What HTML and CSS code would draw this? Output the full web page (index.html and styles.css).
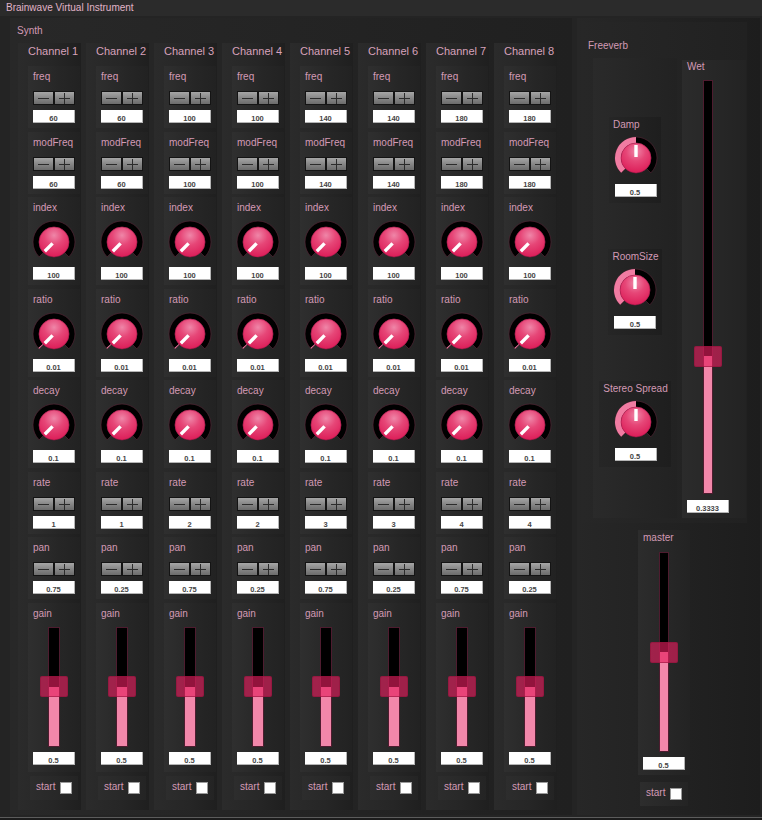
FILE: index.html
```html
<!DOCTYPE html>
<html lang="en">
<head>
<meta charset="utf-8">
<title>Brainwave Virtual Instrument</title>
<link rel="stylesheet" href="styles.css">
</head>
<body>
<svg class="defs" aria-hidden="true">
  <defs>
    <radialGradient id="kg" cx="50%" cy="28%" r="72%">
      <stop offset="0" stop-color="#ef86a8"/>
      <stop offset="0.45" stop-color="#e64677"/>
      <stop offset="1" stop-color="#dc1d58"/>
    </radialGradient>
    <symbol id="minus"><line x1="4" y1="6.5" x2="15" y2="6.5" stroke="#2b2b2b" stroke-width="1"/></symbol>
    <symbol id="plus"><line x1="4" y1="6.5" x2="15" y2="6.5" stroke="#2b2b2b" stroke-width="1"/><line x1="9.5" y1="1" x2="9.5" y2="12" stroke="#2b2b2b" stroke-width="1"/></symbol>
    <symbol id="k-min">
      <path d="M7.15 36.85A21 21 0 1 1 36.85 36.85L32.61 32.61A15 15 0 1 0 11.39 32.61Z" fill="#000" stroke="#5a2639" stroke-width="0.6"/>
      <circle cx="22" cy="22" r="15" fill="url(#kg)" stroke="#a8154a" stroke-width="0.5"/>
      <line x1="20.6" y1="23.4" x2="12.8" y2="31.2" stroke="#fff" stroke-width="3.4"/>
    </symbol>
    <symbol id="k-tick">
      <path d="M7.15 36.85A21 21 0 1 1 36.85 36.85L32.61 32.61A15 15 0 1 0 11.39 32.61Z" fill="#000" stroke="#5a2639" stroke-width="0.6"/>
      <path d="M7.15 36.85A21 21 0 0 1 6.39 36.05L10.85 32.04A15 15 0 0 0 11.39 32.61Z" fill="#f07ca2"/>
      <circle cx="22" cy="22" r="15" fill="url(#kg)" stroke="#a8154a" stroke-width="0.5"/>
      <line x1="20.6" y1="23.4" x2="12.8" y2="31.2" stroke="#fff" stroke-width="3.4"/>
    </symbol>
    <symbol id="k-half">
      <path d="M7.15 36.85A21 21 0 1 1 36.85 36.85L32.61 32.61A15 15 0 1 0 11.39 32.61Z" fill="#000" stroke="#5a2639" stroke-width="0.6"/>
      <path d="M7.15 36.85A21 21 0 0 1 22 1L22 7A15 15 0 0 0 11.39 32.61Z" fill="#f07ca2"/>
      <circle cx="22" cy="22" r="15" fill="url(#kg)" stroke="#a8154a" stroke-width="0.5"/>
      <line x1="22" y1="21" x2="22" y2="9" stroke="#fff" stroke-width="3.4"/>
    </symbol>
  </defs>
</svg>

<div class="app">
  <div class="titlebar">Brainwave Virtual Instrument</div>
  <div class="main">
    <section class="synth">
      <div class="synth-label">Synth</div>
      <div class="channels">

        <div class="channel">
          <div class="ch-title">Channel 1</div>
          <div class="ctrls">
            <div class="panel"><div class="lbl">freq</div><div class="btns"><span class="btn"><svg class="glyph" viewBox="0 0 19 12"><use href="#minus"/></svg></span><span class="btn"><svg class="glyph" viewBox="0 0 19 12"><use href="#plus"/></svg></span></div><div class="val">60</div></div>
            <div class="panel"><div class="lbl">modFreq</div><div class="btns"><span class="btn"><svg class="glyph" viewBox="0 0 19 12"><use href="#minus"/></svg></span><span class="btn"><svg class="glyph" viewBox="0 0 19 12"><use href="#plus"/></svg></span></div><div class="val">60</div></div>
            <div class="panel knobp"><div class="lbl">index</div><svg class="knob" viewBox="0 0 44 44"><use href="#k-min"/></svg><div class="val">100</div></div>
            <div class="panel knobp"><div class="lbl">ratio</div><svg class="knob" viewBox="0 0 44 44"><use href="#k-tick"/></svg><div class="val">0.01</div></div>
            <div class="panel knobp"><div class="lbl">decay</div><svg class="knob" viewBox="0 0 44 44"><use href="#k-min"/></svg><div class="val">0.1</div></div>
            <div class="panel"><div class="lbl">rate</div><div class="btns"><span class="btn"><svg class="glyph" viewBox="0 0 19 12"><use href="#minus"/></svg></span><span class="btn"><svg class="glyph" viewBox="0 0 19 12"><use href="#plus"/></svg></span></div><div class="val">1</div></div>
            <div class="panel"><div class="lbl">pan</div><div class="btns"><span class="btn"><svg class="glyph" viewBox="0 0 19 12"><use href="#minus"/></svg></span><span class="btn"><svg class="glyph" viewBox="0 0 19 12"><use href="#plus"/></svg></span></div><div class="val">0.75</div></div>
            <div class="panel gainp"><div class="lbl">gain</div><div class="slider"><div class="track"><div class="fill" style="height:50%"></div></div><div class="thumb" style="top:calc(50% - 10.5px)"></div></div><div class="val">0.5</div></div>
            <div class="start"><span class="lbl">start</span><span class="check"></span></div>
          </div>
        </div>

        <div class="channel">
          <div class="ch-title">Channel 2</div>
          <div class="ctrls">
            <div class="panel"><div class="lbl">freq</div><div class="btns"><span class="btn"><svg class="glyph" viewBox="0 0 19 12"><use href="#minus"/></svg></span><span class="btn"><svg class="glyph" viewBox="0 0 19 12"><use href="#plus"/></svg></span></div><div class="val">60</div></div>
            <div class="panel"><div class="lbl">modFreq</div><div class="btns"><span class="btn"><svg class="glyph" viewBox="0 0 19 12"><use href="#minus"/></svg></span><span class="btn"><svg class="glyph" viewBox="0 0 19 12"><use href="#plus"/></svg></span></div><div class="val">60</div></div>
            <div class="panel knobp"><div class="lbl">index</div><svg class="knob" viewBox="0 0 44 44"><use href="#k-min"/></svg><div class="val">100</div></div>
            <div class="panel knobp"><div class="lbl">ratio</div><svg class="knob" viewBox="0 0 44 44"><use href="#k-tick"/></svg><div class="val">0.01</div></div>
            <div class="panel knobp"><div class="lbl">decay</div><svg class="knob" viewBox="0 0 44 44"><use href="#k-min"/></svg><div class="val">0.1</div></div>
            <div class="panel"><div class="lbl">rate</div><div class="btns"><span class="btn"><svg class="glyph" viewBox="0 0 19 12"><use href="#minus"/></svg></span><span class="btn"><svg class="glyph" viewBox="0 0 19 12"><use href="#plus"/></svg></span></div><div class="val">1</div></div>
            <div class="panel"><div class="lbl">pan</div><div class="btns"><span class="btn"><svg class="glyph" viewBox="0 0 19 12"><use href="#minus"/></svg></span><span class="btn"><svg class="glyph" viewBox="0 0 19 12"><use href="#plus"/></svg></span></div><div class="val">0.25</div></div>
            <div class="panel gainp"><div class="lbl">gain</div><div class="slider"><div class="track"><div class="fill" style="height:50%"></div></div><div class="thumb" style="top:calc(50% - 10.5px)"></div></div><div class="val">0.5</div></div>
            <div class="start"><span class="lbl">start</span><span class="check"></span></div>
          </div>
        </div>

        <div class="channel">
          <div class="ch-title">Channel 3</div>
          <div class="ctrls">
            <div class="panel"><div class="lbl">freq</div><div class="btns"><span class="btn"><svg class="glyph" viewBox="0 0 19 12"><use href="#minus"/></svg></span><span class="btn"><svg class="glyph" viewBox="0 0 19 12"><use href="#plus"/></svg></span></div><div class="val">100</div></div>
            <div class="panel"><div class="lbl">modFreq</div><div class="btns"><span class="btn"><svg class="glyph" viewBox="0 0 19 12"><use href="#minus"/></svg></span><span class="btn"><svg class="glyph" viewBox="0 0 19 12"><use href="#plus"/></svg></span></div><div class="val">100</div></div>
            <div class="panel knobp"><div class="lbl">index</div><svg class="knob" viewBox="0 0 44 44"><use href="#k-min"/></svg><div class="val">100</div></div>
            <div class="panel knobp"><div class="lbl">ratio</div><svg class="knob" viewBox="0 0 44 44"><use href="#k-tick"/></svg><div class="val">0.01</div></div>
            <div class="panel knobp"><div class="lbl">decay</div><svg class="knob" viewBox="0 0 44 44"><use href="#k-min"/></svg><div class="val">0.1</div></div>
            <div class="panel"><div class="lbl">rate</div><div class="btns"><span class="btn"><svg class="glyph" viewBox="0 0 19 12"><use href="#minus"/></svg></span><span class="btn"><svg class="glyph" viewBox="0 0 19 12"><use href="#plus"/></svg></span></div><div class="val">2</div></div>
            <div class="panel"><div class="lbl">pan</div><div class="btns"><span class="btn"><svg class="glyph" viewBox="0 0 19 12"><use href="#minus"/></svg></span><span class="btn"><svg class="glyph" viewBox="0 0 19 12"><use href="#plus"/></svg></span></div><div class="val">0.75</div></div>
            <div class="panel gainp"><div class="lbl">gain</div><div class="slider"><div class="track"><div class="fill" style="height:50%"></div></div><div class="thumb" style="top:calc(50% - 10.5px)"></div></div><div class="val">0.5</div></div>
            <div class="start"><span class="lbl">start</span><span class="check"></span></div>
          </div>
        </div>

        <div class="channel">
          <div class="ch-title">Channel 4</div>
          <div class="ctrls">
            <div class="panel"><div class="lbl">freq</div><div class="btns"><span class="btn"><svg class="glyph" viewBox="0 0 19 12"><use href="#minus"/></svg></span><span class="btn"><svg class="glyph" viewBox="0 0 19 12"><use href="#plus"/></svg></span></div><div class="val">100</div></div>
            <div class="panel"><div class="lbl">modFreq</div><div class="btns"><span class="btn"><svg class="glyph" viewBox="0 0 19 12"><use href="#minus"/></svg></span><span class="btn"><svg class="glyph" viewBox="0 0 19 12"><use href="#plus"/></svg></span></div><div class="val">100</div></div>
            <div class="panel knobp"><div class="lbl">index</div><svg class="knob" viewBox="0 0 44 44"><use href="#k-min"/></svg><div class="val">100</div></div>
            <div class="panel knobp"><div class="lbl">ratio</div><svg class="knob" viewBox="0 0 44 44"><use href="#k-tick"/></svg><div class="val">0.01</div></div>
            <div class="panel knobp"><div class="lbl">decay</div><svg class="knob" viewBox="0 0 44 44"><use href="#k-min"/></svg><div class="val">0.1</div></div>
            <div class="panel"><div class="lbl">rate</div><div class="btns"><span class="btn"><svg class="glyph" viewBox="0 0 19 12"><use href="#minus"/></svg></span><span class="btn"><svg class="glyph" viewBox="0 0 19 12"><use href="#plus"/></svg></span></div><div class="val">2</div></div>
            <div class="panel"><div class="lbl">pan</div><div class="btns"><span class="btn"><svg class="glyph" viewBox="0 0 19 12"><use href="#minus"/></svg></span><span class="btn"><svg class="glyph" viewBox="0 0 19 12"><use href="#plus"/></svg></span></div><div class="val">0.25</div></div>
            <div class="panel gainp"><div class="lbl">gain</div><div class="slider"><div class="track"><div class="fill" style="height:50%"></div></div><div class="thumb" style="top:calc(50% - 10.5px)"></div></div><div class="val">0.5</div></div>
            <div class="start"><span class="lbl">start</span><span class="check"></span></div>
          </div>
        </div>

        <div class="channel">
          <div class="ch-title">Channel 5</div>
          <div class="ctrls">
            <div class="panel"><div class="lbl">freq</div><div class="btns"><span class="btn"><svg class="glyph" viewBox="0 0 19 12"><use href="#minus"/></svg></span><span class="btn"><svg class="glyph" viewBox="0 0 19 12"><use href="#plus"/></svg></span></div><div class="val">140</div></div>
            <div class="panel"><div class="lbl">modFreq</div><div class="btns"><span class="btn"><svg class="glyph" viewBox="0 0 19 12"><use href="#minus"/></svg></span><span class="btn"><svg class="glyph" viewBox="0 0 19 12"><use href="#plus"/></svg></span></div><div class="val">140</div></div>
            <div class="panel knobp"><div class="lbl">index</div><svg class="knob" viewBox="0 0 44 44"><use href="#k-min"/></svg><div class="val">100</div></div>
            <div class="panel knobp"><div class="lbl">ratio</div><svg class="knob" viewBox="0 0 44 44"><use href="#k-tick"/></svg><div class="val">0.01</div></div>
            <div class="panel knobp"><div class="lbl">decay</div><svg class="knob" viewBox="0 0 44 44"><use href="#k-min"/></svg><div class="val">0.1</div></div>
            <div class="panel"><div class="lbl">rate</div><div class="btns"><span class="btn"><svg class="glyph" viewBox="0 0 19 12"><use href="#minus"/></svg></span><span class="btn"><svg class="glyph" viewBox="0 0 19 12"><use href="#plus"/></svg></span></div><div class="val">3</div></div>
            <div class="panel"><div class="lbl">pan</div><div class="btns"><span class="btn"><svg class="glyph" viewBox="0 0 19 12"><use href="#minus"/></svg></span><span class="btn"><svg class="glyph" viewBox="0 0 19 12"><use href="#plus"/></svg></span></div><div class="val">0.75</div></div>
            <div class="panel gainp"><div class="lbl">gain</div><div class="slider"><div class="track"><div class="fill" style="height:50%"></div></div><div class="thumb" style="top:calc(50% - 10.5px)"></div></div><div class="val">0.5</div></div>
            <div class="start"><span class="lbl">start</span><span class="check"></span></div>
          </div>
        </div>

        <div class="channel">
          <div class="ch-title">Channel 6</div>
          <div class="ctrls">
            <div class="panel"><div class="lbl">freq</div><div class="btns"><span class="btn"><svg class="glyph" viewBox="0 0 19 12"><use href="#minus"/></svg></span><span class="btn"><svg class="glyph" viewBox="0 0 19 12"><use href="#plus"/></svg></span></div><div class="val">140</div></div>
            <div class="panel"><div class="lbl">modFreq</div><div class="btns"><span class="btn"><svg class="glyph" viewBox="0 0 19 12"><use href="#minus"/></svg></span><span class="btn"><svg class="glyph" viewBox="0 0 19 12"><use href="#plus"/></svg></span></div><div class="val">140</div></div>
            <div class="panel knobp"><div class="lbl">index</div><svg class="knob" viewBox="0 0 44 44"><use href="#k-min"/></svg><div class="val">100</div></div>
            <div class="panel knobp"><div class="lbl">ratio</div><svg class="knob" viewBox="0 0 44 44"><use href="#k-tick"/></svg><div class="val">0.01</div></div>
            <div class="panel knobp"><div class="lbl">decay</div><svg class="knob" viewBox="0 0 44 44"><use href="#k-min"/></svg><div class="val">0.1</div></div>
            <div class="panel"><div class="lbl">rate</div><div class="btns"><span class="btn"><svg class="glyph" viewBox="0 0 19 12"><use href="#minus"/></svg></span><span class="btn"><svg class="glyph" viewBox="0 0 19 12"><use href="#plus"/></svg></span></div><div class="val">3</div></div>
            <div class="panel"><div class="lbl">pan</div><div class="btns"><span class="btn"><svg class="glyph" viewBox="0 0 19 12"><use href="#minus"/></svg></span><span class="btn"><svg class="glyph" viewBox="0 0 19 12"><use href="#plus"/></svg></span></div><div class="val">0.25</div></div>
            <div class="panel gainp"><div class="lbl">gain</div><div class="slider"><div class="track"><div class="fill" style="height:50%"></div></div><div class="thumb" style="top:calc(50% - 10.5px)"></div></div><div class="val">0.5</div></div>
            <div class="start"><span class="lbl">start</span><span class="check"></span></div>
          </div>
        </div>

        <div class="channel">
          <div class="ch-title">Channel 7</div>
          <div class="ctrls">
            <div class="panel"><div class="lbl">freq</div><div class="btns"><span class="btn"><svg class="glyph" viewBox="0 0 19 12"><use href="#minus"/></svg></span><span class="btn"><svg class="glyph" viewBox="0 0 19 12"><use href="#plus"/></svg></span></div><div class="val">180</div></div>
            <div class="panel"><div class="lbl">modFreq</div><div class="btns"><span class="btn"><svg class="glyph" viewBox="0 0 19 12"><use href="#minus"/></svg></span><span class="btn"><svg class="glyph" viewBox="0 0 19 12"><use href="#plus"/></svg></span></div><div class="val">180</div></div>
            <div class="panel knobp"><div class="lbl">index</div><svg class="knob" viewBox="0 0 44 44"><use href="#k-min"/></svg><div class="val">100</div></div>
            <div class="panel knobp"><div class="lbl">ratio</div><svg class="knob" viewBox="0 0 44 44"><use href="#k-tick"/></svg><div class="val">0.01</div></div>
            <div class="panel knobp"><div class="lbl">decay</div><svg class="knob" viewBox="0 0 44 44"><use href="#k-min"/></svg><div class="val">0.1</div></div>
            <div class="panel"><div class="lbl">rate</div><div class="btns"><span class="btn"><svg class="glyph" viewBox="0 0 19 12"><use href="#minus"/></svg></span><span class="btn"><svg class="glyph" viewBox="0 0 19 12"><use href="#plus"/></svg></span></div><div class="val">4</div></div>
            <div class="panel"><div class="lbl">pan</div><div class="btns"><span class="btn"><svg class="glyph" viewBox="0 0 19 12"><use href="#minus"/></svg></span><span class="btn"><svg class="glyph" viewBox="0 0 19 12"><use href="#plus"/></svg></span></div><div class="val">0.75</div></div>
            <div class="panel gainp"><div class="lbl">gain</div><div class="slider"><div class="track"><div class="fill" style="height:50%"></div></div><div class="thumb" style="top:calc(50% - 10.5px)"></div></div><div class="val">0.5</div></div>
            <div class="start"><span class="lbl">start</span><span class="check"></span></div>
          </div>
        </div>

        <div class="channel">
          <div class="ch-title">Channel 8</div>
          <div class="ctrls">
            <div class="panel"><div class="lbl">freq</div><div class="btns"><span class="btn"><svg class="glyph" viewBox="0 0 19 12"><use href="#minus"/></svg></span><span class="btn"><svg class="glyph" viewBox="0 0 19 12"><use href="#plus"/></svg></span></div><div class="val">180</div></div>
            <div class="panel"><div class="lbl">modFreq</div><div class="btns"><span class="btn"><svg class="glyph" viewBox="0 0 19 12"><use href="#minus"/></svg></span><span class="btn"><svg class="glyph" viewBox="0 0 19 12"><use href="#plus"/></svg></span></div><div class="val">180</div></div>
            <div class="panel knobp"><div class="lbl">index</div><svg class="knob" viewBox="0 0 44 44"><use href="#k-min"/></svg><div class="val">100</div></div>
            <div class="panel knobp"><div class="lbl">ratio</div><svg class="knob" viewBox="0 0 44 44"><use href="#k-tick"/></svg><div class="val">0.01</div></div>
            <div class="panel knobp"><div class="lbl">decay</div><svg class="knob" viewBox="0 0 44 44"><use href="#k-min"/></svg><div class="val">0.1</div></div>
            <div class="panel"><div class="lbl">rate</div><div class="btns"><span class="btn"><svg class="glyph" viewBox="0 0 19 12"><use href="#minus"/></svg></span><span class="btn"><svg class="glyph" viewBox="0 0 19 12"><use href="#plus"/></svg></span></div><div class="val">4</div></div>
            <div class="panel"><div class="lbl">pan</div><div class="btns"><span class="btn"><svg class="glyph" viewBox="0 0 19 12"><use href="#minus"/></svg></span><span class="btn"><svg class="glyph" viewBox="0 0 19 12"><use href="#plus"/></svg></span></div><div class="val">0.25</div></div>
            <div class="panel gainp"><div class="lbl">gain</div><div class="slider"><div class="track"><div class="fill" style="height:50%"></div></div><div class="thumb" style="top:calc(50% - 10.5px)"></div></div><div class="val">0.5</div></div>
            <div class="start"><span class="lbl">start</span><span class="check"></span></div>
          </div>
        </div>

      </div>
    </section>

    <aside class="side">
      <div class="freeverb">
        <div class="lbl">Freeverb</div>
        <div class="fv-body">
          <div class="fv-knobs">
            <div class="fvp"><div class="lbl">Damp</div><svg class="knob" viewBox="0 0 44 44"><use href="#k-half"/></svg><div class="val">0.5</div></div>
            <div class="fvp"><div class="lbl">RoomSize</div><svg class="knob" viewBox="0 0 44 44"><use href="#k-half"/></svg><div class="val">0.5</div></div>
            <div class="fvp"><div class="lbl">Stereo Spread</div><svg class="knob" viewBox="0 0 44 44"><use href="#k-half"/></svg><div class="val">0.5</div></div>
          </div>
          <div class="fv-wet">
            <div class="lbl">Wet</div>
            <div class="slider tall wet"><div class="track"><div class="fill" style="height:33.33%"></div></div><div class="thumb" style="top:calc(66.67% - 10.5px)"></div></div>
            <div class="val">0.3333</div>
          </div>
        </div>
      </div>
      <div class="master-wrap">
        <div class="master">
          <div class="lbl">master</div>
          <div class="slider tall mst"><div class="track"><div class="fill" style="height:50%"></div></div><div class="thumb" style="top:calc(50% - 10.5px)"></div></div>
          <div class="val">0.5</div>
        </div>
        <div class="start master-start"><span class="lbl">start</span><span class="check"></span></div>
      </div>
    </aside>
  </div>
</div>
</body>
</html>
```

FILE: styles.css
```css
* { box-sizing: border-box; }

html, body {
  margin: 0;
  padding: 0;
}

body {
  width: 762px;
  height: 820px;
  overflow: hidden;
  background: #1c1c1c;
  font-family: "Liberation Sans", Arial, sans-serif;
}

.defs {
  position: absolute;
  width: 0;
  height: 0;
  overflow: hidden;
}

.app {
  height: 818px;
  display: flex;
  flex-direction: column;
  background: #242424;
  border-bottom: 1px solid #5c5c5c;
}

.titlebar {
  height: 16px;
  line-height: 16px;
  font-size: 10px;
  padding-left: 6px;
  color: #e0b4c8;
  background: #2b2b2b;
  white-space: nowrap;
}

.main {
  display: flex;
  gap: 5px;
  height: 797px;
  margin-top: 2px;
  padding-left: 10px;
}

.lbl {
  font-size: 10px;
  line-height: 12px;
  color: #d39ab5;
  white-space: nowrap;
}

/* ---------- Synth ---------- */
.synth {
  width: 562px;
  padding: 7px 0 5px 8px;
  background: linear-gradient(90deg, #282828, #202020);
}

.synth-label {
  font-size: 10px;
  line-height: 12px;
  color: #d39ab5;
  margin-left: -1px;
}

.channels {
  display: flex;
  gap: 5px;
  margin-top: 6px;
}

.channel {
  width: 63px;
  padding: 2px 1px 10px 10px;
  display: flex;
  flex-direction: column;
  background: linear-gradient(90deg, #2b2b2b 0%, #262626 55%, #1f1f1f 100%);
}

.ch-title {
  font-size: 11px;
  line-height: 13px;
  color: #d7a2bb;
  white-space: nowrap;
  margin-bottom: 8px;
}

.ctrls {
  display: flex;
  flex-direction: column;
  gap: 3.5px;
}

.panel {
  width: 52px;
  padding: 5px;
  display: flex;
  flex-direction: column;
  align-items: center;
  background: linear-gradient(90deg, #2f2f2f, #262626 60%, #222222);
}

.panel .lbl,
.fvp .lbl,
.fv-wet .lbl,
.master .lbl {
  align-self: stretch;
}

.btns {
  display: flex;
  margin-top: 8px;
}

.btn {
  width: 21px;
  height: 14px;
  border: 1px solid #141414;
  background: linear-gradient(#a6a6a6, #8a8a8a 45%, #6c6c6c);
  display: flex;
  align-items: center;
  justify-content: center;
}

.glyph {
  width: 19px;
  height: 12px;
  display: block;
}

.val {
  width: 42px;
  height: 13px;
  margin-top: 5px;
  padding-top: 2px;
  background: #ffffff;
  border-right: 1px solid #b4b4b4;
  border-bottom: 1px solid #b4b4b4;
  font-size: 7.5px;
  line-height: 13px;
  font-weight: bold;
  color: #444444;
  text-align: center;
  white-space: nowrap;
}

.knob {
  width: 44px;
  height: 44px;
  display: block;
}

.knobp .knob { margin-top: 6px; }
.knobp .val { margin-top: 3px; }

.gainp { padding-bottom: 7px; }

.slider {
  position: relative;
  width: 42px;
  height: 120px;
  margin-top: 7px;
  display: flex;
  justify-content: center;
}

.track {
  width: 12px;
  height: 100%;
  border: 1px solid #4e1c2f;
  background: #000000;
  display: flex;
  flex-direction: column;
  justify-content: flex-end;
}

.fill {
  background: #f287aa;
}

.thumb {
  position: absolute;
  left: 7px;
  width: 28px;
  height: 21px;
  border-radius: 2px;
  background: rgba(228, 30, 94, 0.64);
  border: 1px solid rgba(140, 18, 56, 0.55);
}

.gainp .val { margin-top: 5px; }

.start {
  width: 48px;
  height: 24px;
  padding: 6px;
  margin-top: 1px;
  align-self: center;
  display: flex;
  align-items: flex-start;
  background: linear-gradient(90deg, #2d2d2d, #242424);
}

.start .lbl {
  line-height: 10px;
}

.check {
  width: 12px;
  height: 12px;
  margin-left: auto;
  background: #ffffff;
  border: 1px solid #9a9a9a;
}

/* ---------- Side (Freeverb + master) ---------- */
.side {
  width: 183px;
  padding: 4px 2px 0 4px;
  display: flex;
  flex-direction: column;
  background: linear-gradient(90deg, #272727, #1d1d1d);
}

.freeverb {
  width: 166px;
  height: 501px;
  padding: 18px 1px 5px 7px;
  background: linear-gradient(90deg, #272727, #212121);
}

.fv-body {
  display: flex;
  gap: 5px;
  margin-top: 6px;
  margin-left: 5px;
}

.fv-knobs {
  width: 84px;
  height: 460px;
  padding-top: 59px;
  display: flex;
  flex-direction: column;
  align-items: center;
  gap: 46px;
  background: linear-gradient(90deg, #2a2a2a, #222222);
}

.fvp {
  min-width: 52px;
  padding: 2px 3px 6px 4px;
  display: flex;
  flex-direction: column;
  align-items: center;
  background: linear-gradient(90deg, #262626, #1e1e1e);
}

.fvp .knob { margin-top: 5px; }
.fvp .val { margin-top: 4px; }

.fv-wet {
  width: 64px;
  height: 458px;
  margin-top: 2px;
  padding: 1px 0 5px 5px;
  display: flex;
  flex-direction: column;
  background: linear-gradient(90deg, #2b2b2b, #232323);
}

.tall .track { width: 10px; }

.wet {
  height: 414px;
  margin-top: 7px;
}

.fv-wet .val { margin-top: 6px; }

.master-wrap {
  width: 166px;
  display: flex;
  flex-direction: column;
  align-items: center;
}

.master {
  width: 52px;
  margin-top: 7px;
  padding: 2px 5px 5px;
  display: flex;
  flex-direction: column;
  align-items: center;
  background: linear-gradient(90deg, #2c2c2c, #232323);
}

.mst {
  height: 200px;
  margin-top: 8px;
}

.master .val { margin-top: 5px; }

.master-start {
  margin-top: 7px;
}
```
